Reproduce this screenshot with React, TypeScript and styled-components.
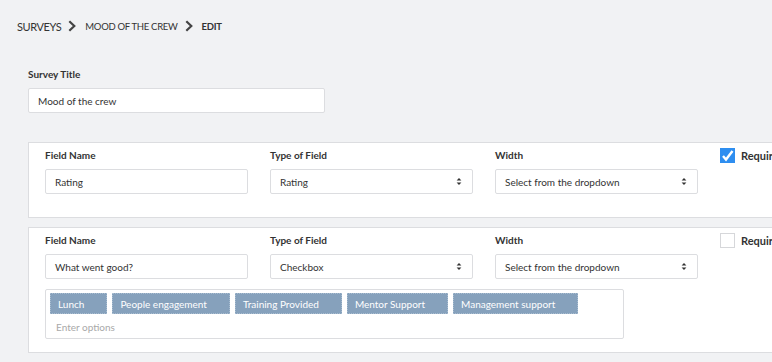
import styled, { createGlobalStyle } from 'styled-components'

const GlobalStyle = createGlobalStyle`
  html, body {
    margin: 0;
    padding: 0;
    background: #f1f2f4;
    overflow: hidden;
  }
  body {
    font-family: Lato, "Open Sans", sans-serif;
    color: #333;
  }
`

const Page = styled.div`
  width: 772px;
  height: 362px;
  overflow: hidden;
`

const Breadcrumb = styled.nav`
  display: flex;
  align-items: center;
  height: 16px;
  padding: 18px 0 0 17px;
`

const Crumb = styled.span<{ $big?: boolean; $bold?: boolean }>`
  font-size: ${(p) => (p.$big ? '11px' : '9.5px')};
  font-weight: ${(p) => (p.$bold ? 700 : 400)};
  text-transform: uppercase;
  letter-spacing: ${(p) => (p.$big ? '-0.4px' : '-0.3px')};
  color: #333;
`

const ChevronWrap = styled.span`
  display: inline-flex;
  margin: 0 9px 0 7px;
`

const Form = styled.div`
  padding: 0 0 0 28px;
`

const Label = styled.div`
  font-size: 10px;
  font-weight: 700;
  color: #333;
  line-height: 13px;
  margin-bottom: 7px;
`

const TitleBlock = styled.div`
  margin-top: 34px;
  margin-bottom: 29px;
`

const TextInput = styled.div<{ $width: number }>`
  box-sizing: border-box;
  width: ${(p) => p.$width}px;
  height: 25px;
  background: #fff;
  border: 1px solid #dcdde0;
  border-radius: 2px;
  display: flex;
  align-items: center;
  justify-content: space-between;
  padding: 0 10px 0 9px;
  font-size: 10px;
  color: #333;
  white-space: nowrap;
`

const Card = styled.section`
  box-sizing: border-box;
  width: 800px;
  background: #fff;
  border: 1px solid #dcdde0;
  padding: 6px 0 13px 16px;
  margin-bottom: 9px;
`

const FieldRow = styled.div`
  display: flex;
  gap: 22px;
  margin-bottom: 10px;
`

const Column = styled.div`
  width: 203px;
  display: flex;
  flex-direction: column;
`

const RequiredBox = styled.label`
  display: flex;
  align-items: center;
  gap: 6px;
  font-size: 11px;
  font-weight: 700;
  color: #333;
  margin-top: -1px;
  align-self: flex-start;
  white-space: nowrap;
`

const Check = styled.span<{ $checked?: boolean }>`
  box-sizing: border-box;
  width: 15px;
  height: 15px;
  display: inline-flex;
  align-items: center;
  justify-content: center;
  background: ${(p) => (p.$checked ? '#2e8ef0' : '#fff')};
  border: 1px solid ${(p) => (p.$checked ? '#2e8ef0' : '#d6d7da')};
`

const Options = styled.div`
  box-sizing: border-box;
  width: 579px;
  height: 50px;
  margin-top: 2px;
  background: #fff;
  border: 1px solid #dcdde0;
  border-radius: 2px;
  padding: 3px 4px;
`

const Tags = styled.div`
  display: flex;
  gap: 5px;
`

const Tag = styled.span`
  box-sizing: border-box;
  flex-shrink: 0;
  white-space: nowrap;
  height: 21px;
  display: inline-flex;
  align-items: center;
  padding: 0 22px 0 7px;
  background: #86a1bc;
  border: 1px dotted #a9bdd0;
  color: #fff;
  font-size: 10px;
`

const Placeholder = styled.div`
  font-size: 10px;
  line-height: 12px;
  color: #a9a9a9;
  padding: 7px 0 0 6px;
`

const Chevron = () => (
  <ChevronWrap>
    <svg width="8" height="12" viewBox="0 0 8 12">
      <path d="M1.3 1.2 L6.3 6 L1.3 10.8" fill="none" stroke="#444" strokeWidth="2.2" />
    </svg>
  </ChevronWrap>
)

const Caret = () => (
  <svg width="6" height="9" viewBox="0 0 6 9">
    <path d="M0.6 3.6 L3 0.9 L5.4 3.6 Z M0.6 5.4 L3 8.1 L5.4 5.4 Z" fill="#333" />
  </svg>
)

const Tick = () => (
  <svg width="13" height="13" viewBox="0 0 13 13">
    <path d="M2 7 L5 10.5 L11.5 2" fill="none" stroke="#fff" strokeWidth="2.4" />
  </svg>
)

type FieldProps = {
  name: string
  type: string
  required?: boolean
  options?: string[]
}

const FieldCard = ({ name, type, required, options }: FieldProps) => (
  <Card>
    <FieldRow>
      <Column>
        <Label>Field Name</Label>
        <TextInput $width={203}>{name}</TextInput>
      </Column>
      <Column>
        <Label>Type of Field</Label>
        <TextInput $width={203}>
          {type}
          <Caret />
        </TextInput>
      </Column>
      <Column>
        <Label>Width</Label>
        <TextInput $width={203}>
          Select from the dropdown
          <Caret />
        </TextInput>
      </Column>
      <RequiredBox>
        <Check $checked={required}>{required && <Tick />}</Check>
        Required
      </RequiredBox>
    </FieldRow>
    {options && (
      <Options>
        <Tags>
          {options.map((o) => (
            <Tag key={o}>{o}</Tag>
          ))}
        </Tags>
        <Placeholder>Enter options</Placeholder>
      </Options>
    )}
  </Card>
)

export default function App() {
  return (
    <Page>
      <GlobalStyle />
      <Breadcrumb>
        <Crumb $big>Surveys</Crumb>
        <Chevron />
        <Crumb>Mood of the crew</Crumb>
        <Chevron />
        <Crumb $bold>Edit</Crumb>
      </Breadcrumb>
      <Form>
        <TitleBlock>
          <Label>Survey Title</Label>
          <TextInput $width={297}>Mood of the crew</TextInput>
        </TitleBlock>
        <FieldCard name="Rating" type="Rating" required />
        <FieldCard
          name="What went good?"
          type="Checkbox"
          options={['Lunch', 'People engagement', 'Training Provided', 'Mentor Support', 'Management support']}
        />
      </Form>
    </Page>
  )
}
